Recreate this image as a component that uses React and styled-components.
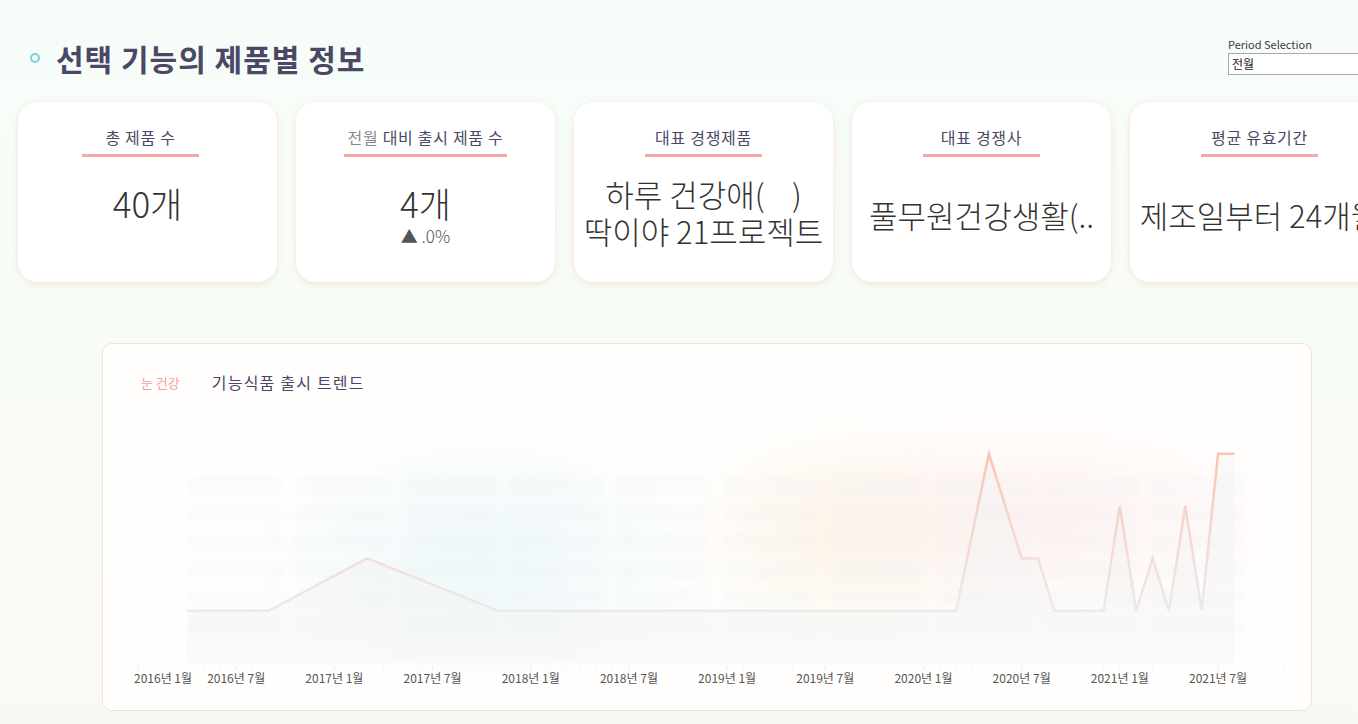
import React from "react";
import styled, { createGlobalStyle } from "styled-components";

const GlobalStyle = createGlobalStyle`
  html, body {
    margin: 0;
    padding: 0;
  }
  body {
    font-family: "Noto Sans CJK KR", "Noto Sans", sans-serif;
    background: linear-gradient(180deg, #f6fdf8 0%, #f8fbf5 60%, #f9f9f3 100%);
    min-height: 724px;
    overflow: hidden;
  }
`;

const Page = styled.div`
  width: 1358px;
  height: 724px;
  overflow: hidden;
  box-sizing: border-box;
`;

const Header = styled.header`
  display: flex;
  justify-content: space-between;
  align-items: flex-start;
  height: 102px;
`;

const TitleWrap = styled.div`
  display: flex;
  align-items: center;
  gap: 16px;
  padding: 36px 0 0 30px;
`;

const Bullet = styled.span`
  width: 6px;
  height: 6px;
  border: 2px solid #6fd6e0;
  border-radius: 50%;
`;

const PageTitle = styled.h1`
  margin: 0;
  font-size: 30px;
  font-weight: 700;
  color: #4a4866;
  letter-spacing: 1px;
`;

const PeriodBox = styled.div`
  display: flex;
  flex-direction: column;
  gap: 2px;
  width: 130px;
  padding-top: 37px;
`;

const PeriodLabel = styled.label`
  font-size: 11px;
  color: #3a3a4a;
  line-height: 14px;
`;

const SelectBox = styled.div`
  height: 20px;
  width: 160px;
  border: 1px solid #a9a9a9;
  background: #fff;
  font-size: 12px;
  line-height: 20px;
  padding-left: 3px;
  color: #222;
`;

const CardRow = styled.section`
  display: flex;
  gap: 19px;
  padding-left: 18px;
  height: 184px;
`;

const Card = styled.div`
  flex: 0 0 259px;
  height: 180px;
  background: #fff;
  border-radius: 20px;
  box-shadow: 0 2px 6px rgba(248, 196, 186, 0.45);
  display: flex;
  flex-direction: column;
  align-items: center;
  box-sizing: border-box;
  padding: 23px 0 10px;
`;

const CardTitle = styled.div`
  min-width: 117px;
  padding: 0 4px 5px;
  margin-right: ${(p) => p.$shift || 0}px;
  box-sizing: border-box;
  border-bottom: 3px solid #f7a8a5;
  text-align: center;
  font-size: 16px;
  line-height: 24px;
  letter-spacing: 0.7px;
  color: #4a4866;
  white-space: nowrap;
`;

const Muted = styled.span`
  color: #8a8a8a;
`;

const CardBody = styled.div`
  flex: 1;
  display: flex;
  flex-direction: column;
  align-items: center;
  justify-content: center;
  width: 100%;
`;

const Value = styled.div`
  font-size: ${(p) => p.$size || 35}px;
  line-height: ${(p) => (p.$lines ? 37 : 40)}px;
  margin-bottom: ${(p) => (p.$lines ? 6 : 0)}px;
  font-weight: 300;
  color: #333;
  white-space: nowrap;
  text-align: center;
`;

const Sub = styled.div`
  margin-top: 3px;
  font-size: 17px;
  line-height: 20px;
  height: 20px;
  color: #555;
  font-weight: 300;
`;

const ChartCard = styled.section`
  margin: 57px 0 0 102px;
  width: 1210px;
  height: 368px;
  box-sizing: border-box;
  border: 1px solid #f6e0d9;
  border-radius: 10px;
  background: #fffefd;
  overflow: hidden;
`;

const Legend = styled.div`
  display: flex;
  align-items: center;
  gap: 32px;
  padding: 18px 0 0 38px;
  height: 40px;
`;

const LegendTag = styled.span`
  font-size: 13px;
  color: #f59f9f;
`;

const ChartTitle = styled.span`
  font-size: 16px;
  letter-spacing: 1.2px;
  color: #4a4866;
`;

const ChartSvg = styled.svg`
  display: block;
  margin-top: 8px;
`;

const X0 = 35;
const MX = 16.364;
const Y0 = 253;
const UY = 52.3;
const xm = (m) => X0 + MX * m;
const yv = (v) => Y0 - UY * v;

const series = [
  [3, 1], [8, 1], [14, 2], [22, 1], [50, 1], [52, 4], [54, 2], [55, 2],
  [56, 1], [59, 1], [60, 3], [61, 1], [62, 2], [63, 1], [64, 3], [65, 1],
  [66, 4], [67, 4],
];

const labels = [
  "2016년 1월", "2016년 7월", "2017년 1월", "2017년 7월", "2018년 1월", "2018년 7월",
  "2019년 1월", "2019년 7월", "2020년 1월", "2020년 7월", "2021년 1월", "2021년 7월",
];

const TrendChart = () => {
  const pts = series.map(([m, v]) => `${xm(m).toFixed(1)},${yv(v).toFixed(1)}`);
  const area = `${xm(3)},${Y0} ${pts.join(" ")} ${xm(67)},${Y0}`;
  const tiles = [];
  for (let c = 0; c < 10; c++) {
    for (let r = 0; r < 6; r++) {
      tiles.push(
        <rect key={`${c}-${r}`} x={85 + c * 107} y={67 + r * 28} width={94} height={18} rx={4} />
      );
    }
  }
  return (
    <ChartSvg width="1208" height="290" viewBox="0 0 1208 290">
      <defs>
        <linearGradient id="lineGrad" gradientUnits="userSpaceOnUse" x1="0" y1={yv(1)} x2="0" y2={yv(4)}>
          <stop offset="0" stopColor="#ebeaea" />
          <stop offset="0.33" stopColor="#f3ded8" />
          <stop offset="0.66" stopColor="#f6d2c7" />
          <stop offset="1" stopColor="#fcc3b1" />
        </linearGradient>
        <radialGradient id="pinkGlow" cx="0.5" cy="0.5" r="0.5">
          <stop offset="0" stopColor="#fdeeeb" stopOpacity="0.8" />
          <stop offset="1" stopColor="#fdeeeb" stopOpacity="0" />
        </radialGradient>
        <radialGradient id="blueGlow" cx="0.5" cy="0.5" r="0.5">
          <stop offset="0" stopColor="#eaf7fa" stopOpacity="0.8" />
          <stop offset="1" stopColor="#eaf7fa" stopOpacity="0" />
        </radialGradient>
        <radialGradient id="yellowGlow" cx="0.5" cy="0.5" r="0.5">
          <stop offset="0" stopColor="#fdf4e2" stopOpacity="0.8" />
          <stop offset="1" stopColor="#fdf4e2" stopOpacity="0" />
        </radialGradient>
        <filter id="soft" x="-5%" y="-5%" width="110%" height="110%">
          <feGaussianBlur stdDeviation="2.5" />
        </filter>
      </defs>
      <ellipse cx="380" cy="150" rx="240" ry="140" fill="url(#blueGlow)" />
      <ellipse cx="740" cy="125" rx="170" ry="120" fill="url(#yellowGlow)" />
      <ellipse cx="920" cy="110" rx="280" ry="110" fill="url(#pinkGlow)" />
      <g fill="#edf1f4" opacity="0.22" filter="url(#soft)">
        {tiles}
      </g>
      <polygon points={area} fill="#f2f2f2" opacity="0.4" />
      <polyline
        points={pts.join(" ")}
        fill="none"
        stroke="url(#lineGrad)"
        strokeWidth="2.5"
        strokeLinejoin="miter"
      />
      <g stroke="#ececec" strokeWidth="1">
        {Array.from({ length: 71 }, (_, m) => (
          <line key={m} x1={xm(m)} x2={xm(m)} y1={Y0 + 2} y2={Y0 + (m % 6 === 0 ? 7 : 4)} />
        ))}
      </g>
      <g fontFamily='"Noto Sans CJK KR", sans-serif' fontSize="12" fill="#555">
        {labels.map((t, i) => (
          <text
            key={t}
            x={i === 0 ? 31 : xm(i * 6)}
            y={Y0 + 20}
            textAnchor={i === 0 ? "start" : "middle"}
          >
            {t}
          </text>
        ))}
      </g>
    </ChartSvg>
  );
};

const App = () => (
  <>
    <GlobalStyle />
    <Page>
      <Header>
        <TitleWrap>
          <Bullet />
          <PageTitle>선택 기능의 제품별 정보</PageTitle>
        </TitleWrap>
        <PeriodBox>
          <PeriodLabel>Period Selection</PeriodLabel>
          <SelectBox>전월</SelectBox>
        </PeriodBox>
      </Header>

      <CardRow>
        <Card>
          <CardTitle $shift={14}>총 제품 수</CardTitle>
          <CardBody>
            <Value>40개</Value>
            <Sub />
          </CardBody>
        </Card>
        <Card>
          <CardTitle>
            <Muted>전월</Muted> 대비 출시 제품 수
          </CardTitle>
          <CardBody>
            <Value>4개</Value>
            <Sub>▲ .0%</Sub>
          </CardBody>
        </Card>
        <Card>
          <CardTitle>대표 경쟁제품</CardTitle>
          <CardBody>
            <Value $size={31} $lines>
              하루 건강애(&nbsp;&nbsp;&nbsp;&nbsp;)
              <br />
              딱이야 21프로젝트
            </Value>
          </CardBody>
        </Card>
        <Card>
          <CardTitle>대표 경쟁사</CardTitle>
          <CardBody>
            <Value $size={31}>풀무원건강생활(..</Value>
          </CardBody>
        </Card>
        <Card>
          <CardTitle>평균 유효기간</CardTitle>
          <CardBody>
            <Value $size={31}>제조일부터 24개월</Value>
          </CardBody>
        </Card>
      </CardRow>

      <ChartCard>
        <Legend>
          <LegendTag>눈 건강</LegendTag>
          <ChartTitle>기능식품 출시 트렌드</ChartTitle>
        </Legend>
        <TrendChart />
      </ChartCard>
    </Page>
  </>
);

export default App;
